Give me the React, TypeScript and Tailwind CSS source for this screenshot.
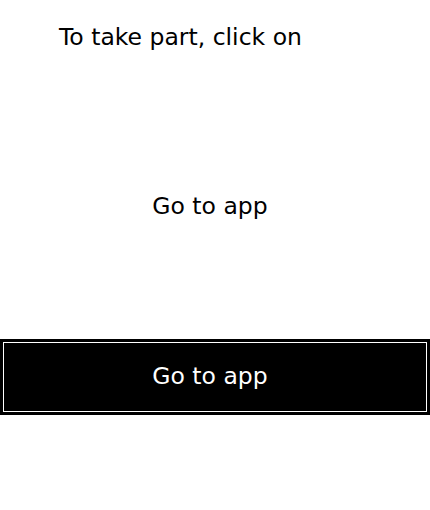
export default function App() {
  return (
    <div
      className="w-[430px] h-[510px] bg-white text-black flex flex-col"
      style={{ fontFamily: "'Century Gothic', 'DejaVu Sans', sans-serif" }}
    >
      <p className="pl-[59px] pt-[22px] text-[23.5px] leading-[30px]">To take part, click on</p>

      <div className="h-[139px]" />
      <p className="pr-[10px] text-center text-[23.5px] leading-[30px]">Go to app</p>

      <div className="h-[118px]" />
      <button className="w-[430px] h-[76px] bg-black p-[3px]">
        <span className="flex h-full w-full items-center justify-center border border-white pr-[10px] text-[23.5px] text-white">
          Go to app
        </span>
      </button>
    </div>
  );
}
